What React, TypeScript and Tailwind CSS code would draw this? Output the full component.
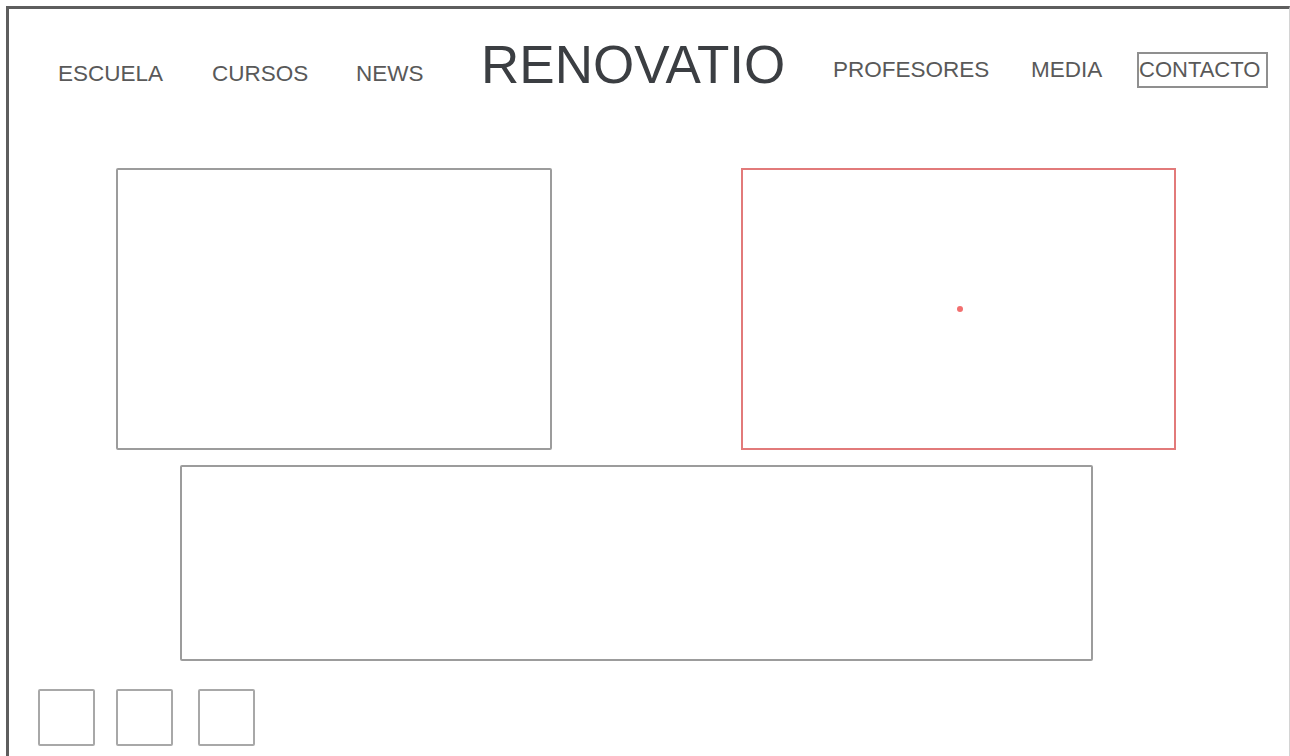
const navLeft = [
  { label: 'ESCUELA', w: 'w-[154px]' },
  { label: 'CURSOS', w: 'w-[144px]' },
  { label: 'NEWS', w: 'w-[125px]' },
];

const navRight = [
  { label: 'PROFESORES', w: 'w-[198px]' },
  { label: 'MEDIA', w: 'w-[106px]' },
];

const NavLink = ({ label, w, top }: { label: string; w: string; top: string }) => (
  <a href="#" className={`${w} ${top} shrink-0 text-[22.5px] leading-none text-[#595959]`}>
    {label}
  </a>
);

const Placeholder = ({ className = '' }: { className?: string }) => (
  <div className={`shrink-0 rounded-[2px] border-2 ${className}`} />
);

const App = () => {
  return (
    <div className="h-[756px] overflow-hidden bg-white pt-[6px] pl-[6px] font-['Liberation_Sans',Arial,sans-serif]">
      <div className="h-full border-t-[3px] border-l-[3px] border-t-[#5e5e5e] border-l-[#5e5e5e] border-r border-r-[#d4d4d4]">
        {/* top bar */}
        <header className="flex h-[159px] items-start pl-[49px]">
          {navLeft.map((item) => (
            <NavLink key={item.label} {...item} top="mt-[54px]" />
          ))}
          <h1 className="mt-[29px] w-[352px] shrink-0 text-[53px] leading-none font-normal text-[#3b3e42]">
            RENOVATIO
          </h1>
          {navRight.map((item) => (
            <NavLink key={item.label} {...item} top="mt-[50px]" />
          ))}
          <a
            href="#"
            className="mt-[43px] w-[131px] shrink-0 border-2 border-[#8f8f8f] pt-[5px] pb-[5px] text-[22px] leading-none text-[#595959]"
          >
            CONTACTO
          </a>
        </header>

        {/* featured blocks */}
        <section className="flex pl-[107px]">
          <Placeholder className="h-[282px] w-[436px] border-[#9c9c9c]" />
          <div className="ml-[189px] flex h-[282px] w-[435px] shrink-0 items-center justify-center border-2 border-[#e27a7a]">
            <span className="ml-[2px] h-[6px] w-[6px] rounded-full bg-[#f26f6f]" />
          </div>
        </section>

        <section className="mt-[15px] pl-[171px]">
          <Placeholder className="h-[196px] w-[913px] border-[#9c9c9c]" />
        </section>

        {/* social squares */}
        <footer className="mt-[28px] flex pl-[29px]">
          <Placeholder className="h-[57px] w-[57px] border-[#a8a8a8]" />
          <Placeholder className="ml-[21px] h-[57px] w-[57px] border-[#a8a8a8]" />
          <Placeholder className="ml-[25px] h-[57px] w-[57px] border-[#a8a8a8]" />
        </footer>
      </div>
    </div>
  );
};

export default App;
